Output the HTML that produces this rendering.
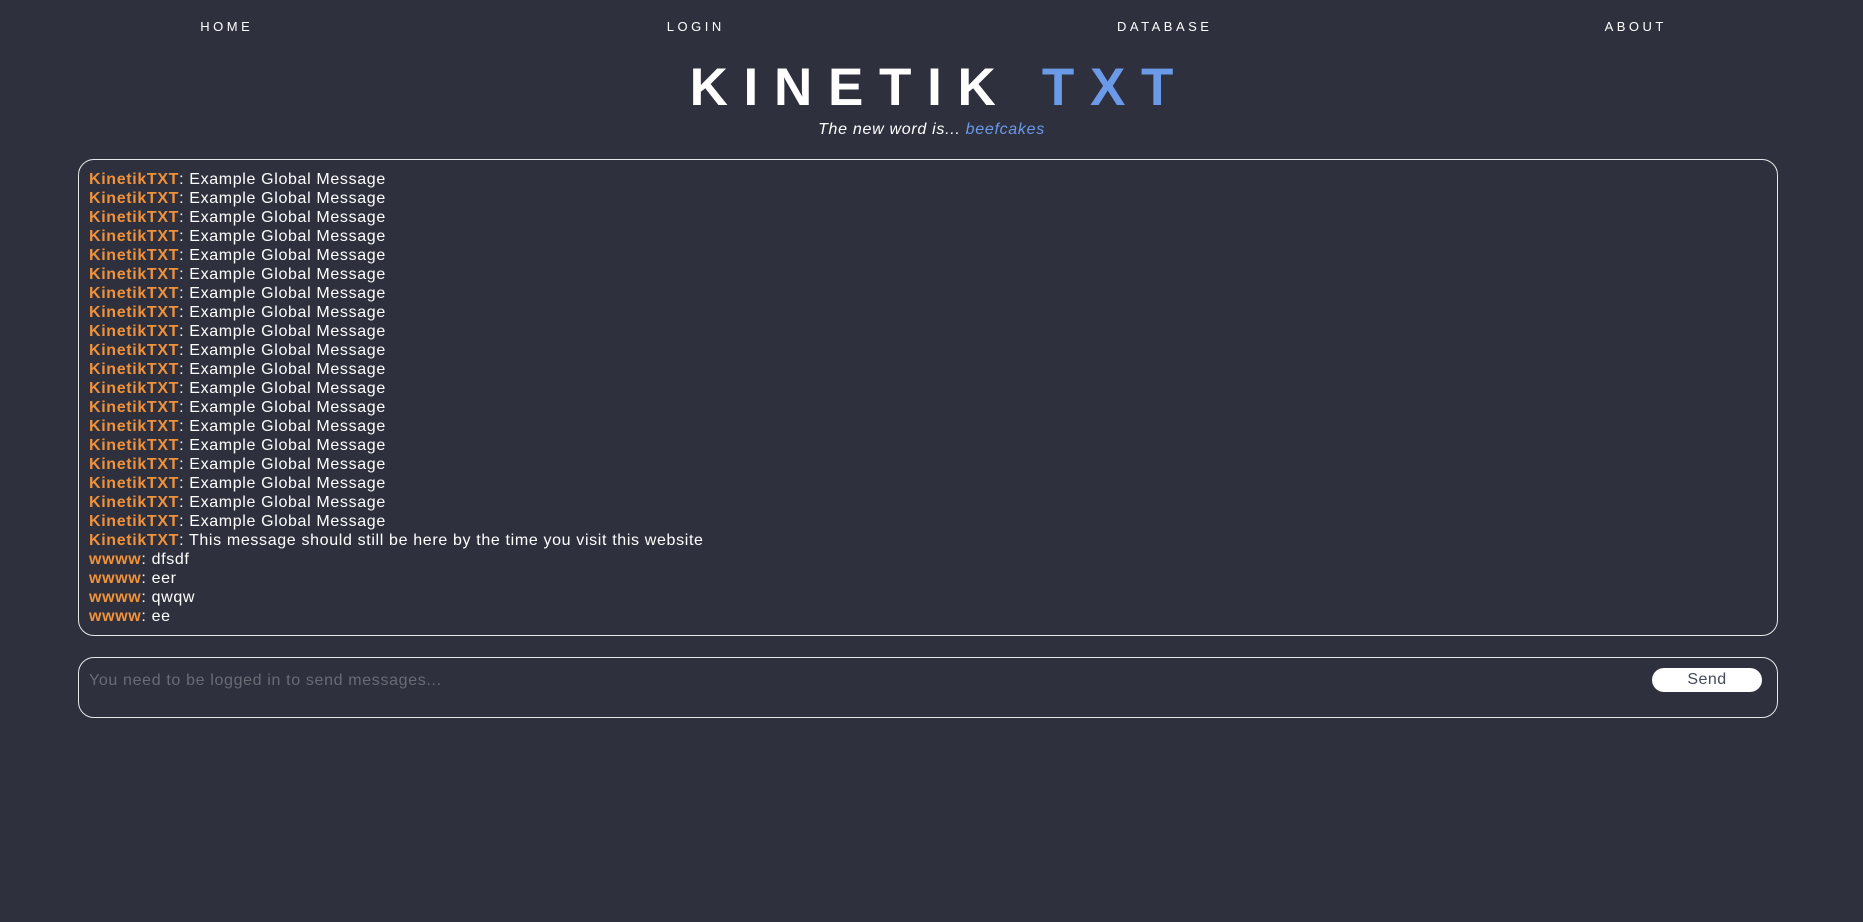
<!DOCTYPE html>
<html><head><style>
body{margin:0;background:#2e303e;width:1863px;height:922px;overflow:hidden;font-family:"Liberation Sans",sans-serif;color:#fff}
.nav div{position:absolute;top:18px;width:200px;margin-left:-100px;text-align:center;font-size:13px;letter-spacing:3.5px;line-height:17px;text-indent:3.5px}
.title{position:absolute;top:58px;left:0;width:1863px;text-align:center;font-size:53px;font-weight:bold;letter-spacing:15.7px;line-height:60px;text-indent:15.7px}
.title span{color:#6b9ae8}
.sub{position:absolute;top:120px;left:0;width:1863px;text-align:center;font-size:16px;font-style:italic;line-height:20px;letter-spacing:0.7px}
.sub span{color:#6b9ae8}
.chat{position:absolute;left:78px;top:159px;width:1700px;height:477px;border:1.5px solid #e8e8ea;border-radius:16px;box-sizing:border-box;padding:10px 0 0 10px;font-size:16px;line-height:19px;letter-spacing:0.65px}
.chat b{color:#f0923a}
.inp{position:absolute;left:78px;top:657px;width:1700px;height:61px;border:1.5px solid #e8e8ea;border-radius:16px;box-sizing:border-box}
.ph{position:absolute;left:10px;top:14px;color:#6a6b75;font-size:16px;letter-spacing:0.65px}
.send{position:absolute;left:1573px;top:10px;width:110px;height:24px;background:#fff;border-radius:12px;color:#44485a;text-align:center;font-size:16px;line-height:24px;letter-spacing:0.5px}
</style></head><body>
<div class="nav"><div style="left:225px">HOME</div><div style="left:694px">LOGIN</div><div style="left:1163px">DATABASE</div><div style="left:1634px">ABOUT</div></div>
<div class="title">KINETIK <span>TXT</span></div>
<div class="sub">The new word is... <span>beefcakes</span></div>
<div class="chat">
<div><b>KinetikTXT</b>: Example Global Message</div>
<div><b>KinetikTXT</b>: Example Global Message</div>
<div><b>KinetikTXT</b>: Example Global Message</div>
<div><b>KinetikTXT</b>: Example Global Message</div>
<div><b>KinetikTXT</b>: Example Global Message</div>
<div><b>KinetikTXT</b>: Example Global Message</div>
<div><b>KinetikTXT</b>: Example Global Message</div>
<div><b>KinetikTXT</b>: Example Global Message</div>
<div><b>KinetikTXT</b>: Example Global Message</div>
<div><b>KinetikTXT</b>: Example Global Message</div>
<div><b>KinetikTXT</b>: Example Global Message</div>
<div><b>KinetikTXT</b>: Example Global Message</div>
<div><b>KinetikTXT</b>: Example Global Message</div>
<div><b>KinetikTXT</b>: Example Global Message</div>
<div><b>KinetikTXT</b>: Example Global Message</div>
<div><b>KinetikTXT</b>: Example Global Message</div>
<div><b>KinetikTXT</b>: Example Global Message</div>
<div><b>KinetikTXT</b>: Example Global Message</div>
<div><b>KinetikTXT</b>: Example Global Message</div>
<div><b>KinetikTXT</b>: This message should still be here by the time you visit this website</div>
<div><b>wwww</b>: dfsdf</div>
<div><b>wwww</b>: eer</div>
<div><b>wwww</b>: qwqw</div>
<div><b>wwww</b>: ee</div>
</div>
<div class="inp"><div class="ph">You need to be logged in to send messages...</div><div class="send">Send</div></div>
</body></html>
